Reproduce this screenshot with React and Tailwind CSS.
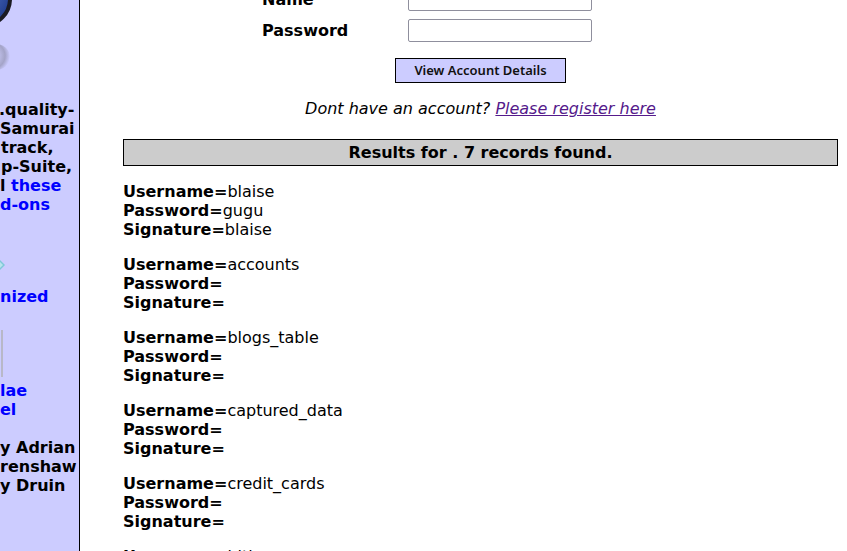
import React from "react";

const records = [
  { u: "blaise", p: "gugu", s: "blaise" },
  { u: "accounts", p: "", s: "" },
  { u: "blogs_table", p: "", s: "" },
  { u: "captured_data", p: "", s: "" },
  { u: "credit_cards", p: "", s: "" },
  { u: "hitlog", p: "", s: "" },
  { u: "pen_test_tools", p: "", s: "" },
];

function Sidebar() {
  return (
    <div className="relative w-[80px] shrink-0 h-full bg-[#ccccff] border-r border-black overflow-hidden font-bold text-[16px] leading-[19px] text-black">
      <svg className="absolute left-0 top-0" width="40" height="80" viewBox="0 0 40 80">
        <defs>
          <radialGradient id="blu" cx="0.3" cy="0.3" r="0.8">
            <stop offset="0" stopColor="#6a86d8" />
            <stop offset="1" stopColor="#1f3c8c" />
          </radialGradient>
          <radialGradient id="gry" cx="0.3" cy="0.45" r="0.7">
            <stop offset="0" stopColor="#c8c8f4" />
            <stop offset="0.5" stopColor="#b8b8e0" />
            <stop offset="0.75" stopColor="#a4a4c8" />
            <stop offset="1" stopColor="#ccccff" />
          </radialGradient>
        </defs>
        <circle cx="-16" cy="-1" r="26" fill="url(#blu)" stroke="#1a1a22" strokeWidth="4" />
        <ellipse cx="-4" cy="57" rx="14" ry="13" fill="url(#gry)" />
      </svg>
      <svg className="absolute left-0 top-[259px]" width="8" height="12" viewBox="0 0 8 12">
        <polygon points="0,1 5,6 0,11" fill="#7fc8d8" />
        <polygon points="0,3 3,6 0,9" fill="#b8e4ee" />
      </svg>
      <div className="absolute left-[1px] top-[330px] w-[2px] h-[47px] bg-[#b8b8c8]" />
      <div className="flex flex-col whitespace-nowrap pt-[100px]">
        <div className="-ml-[1px]">.quality-</div>
        <div>Samurai</div>
        <div className="pl-[1px]">track,</div>
        <div className="pl-[1px]">p-Suite,</div>
        <div>
          l <span className="text-[#0000ff]">these</span>
        </div>
        <div className="text-[#0000ff]">d-ons</div>
        <div className="mt-[73px] text-[#0000ff]">nized</div>
        <div className="mt-[75px] text-[#0000ff]">lae</div>
        <div className="text-[#0000ff]">el</div>
        <div className="mt-[19px]">y Adrian</div>
        <div>renshaw</div>
        <div>y Druin</div>
      </div>
    </div>
  );
}

export default function App() {
  return (
    <div
      className="flex w-[847px] h-[551px] overflow-hidden bg-white text-black text-[16px] leading-[19px]"
      style={{ fontFamily: '"DejaVu Sans", sans-serif' }}
    >
      <Sidebar />
      <div className="flex-1 -mt-[12px]">
        <div className="ml-[182px] grid grid-cols-[146px_184px] gap-y-[8px] items-center">
          <div className="font-bold">Name</div>
          <div className="h-[23px] border border-[#8f8f9d] rounded-[2px] bg-white" />
          <div className="font-bold">Password</div>
          <div className="h-[23px] border border-[#8f8f9d] rounded-[2px] bg-white" />
        </div>
        <div className="pl-[34px] flex flex-col items-center">
          <button
            className="mt-[16px] w-[171px] h-[25px] shrink-0 border border-black bg-[#ccccff] text-[13px] font-semibold text-[#111] leading-none"
            style={{ fontFamily: '"Noto Sans", sans-serif' }}
          >
            View Account Details
          </button>
          <div className="mt-[16px] italic">
            Dont have an account?{" "}
            <a href="#" className="text-[#551a8b] underline">
              Please register here
            </a>
          </div>
        </div>
        <div className="ml-[43px] w-[715px] mt-[21px] h-[27px] border border-black bg-[#cccccc] flex items-center justify-center font-bold">
          Results for . 7 records found.
        </div>
        <div className="ml-[43px] mt-[16px] flex flex-col gap-[16px]">
          {records.map((r) => (
            <div key={r.u} className="flex flex-col shrink-0">
              <div>
                <span className="font-bold">Username=</span>
                {r.u}
              </div>
              <div>
                <span className="font-bold">Password=</span>
                {r.p}
              </div>
              <div>
                <span className="font-bold">Signature=</span>
                {r.s}
              </div>
            </div>
          ))}
        </div>
      </div>
    </div>
  );
}
